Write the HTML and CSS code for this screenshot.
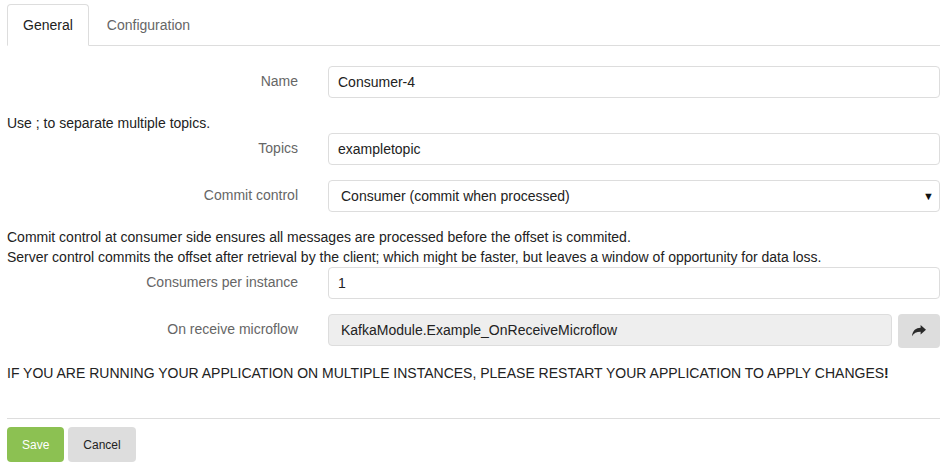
FILE: index.html
```html
<!DOCTYPE html>
<html>
<head>
<meta charset="utf-8">
<link rel="stylesheet" href="styles.css">
</head>
<body>
<div class="page">
  <ul class="tabs">
    <li class="tab active">General</li>
    <li class="tab">Configuration</li>
  </ul>
  <form class="form">
    <div class="row">
      <label class="label">Name</label>
      <div class="field"><div class="input">Consumer-4</div></div>
    </div>
    <p class="help">Use ; to separate multiple topics.</p>
    <div class="row">
      <label class="label">Topics</label>
      <div class="field"><div class="input">exampletopic</div></div>
    </div>
    <div class="row">
      <label class="label">Commit control</label>
      <div class="field"><div class="input select"><span class="sel-text">Consumer (commit when processed)</span><span class="caret">&#9660;</span></div></div>
    </div>
    <p class="help">Commit control at consumer side ensures all messages are processed before the offset is commited.<br>Server control commits the offset after retrieval by the client; which might be faster, but leaves a window of opportunity for data loss.</p>
    <div class="row">
      <label class="label">Consumers per instance</label>
      <div class="field"><div class="input">1</div></div>
    </div>
    <div class="row">
      <label class="label">On receive microflow</label>
      <div class="field group">
        <div class="input readonly">KafkaModule.Example_OnReceiveMicroflow</div>
        <button type="button" class="icon-btn">
          <svg width="14" height="12" viewBox="0 0 13 11"><path d="M13 4.3 L8 0 V2.4 C3.8 2.5 0.5 4.8 0 10.4 C1.6 7.6 4.2 6.4 8 6.3 V8.7 Z" fill="#2a2a2a"/></svg>
        </button>
      </div>
    </div>
    <p class="warning">IF YOU ARE RUNNING YOUR APPLICATION ON MULTIPLE INSTANCES, PLEASE RESTART YOUR APPLICATION TO APPLY CHANGES<b>!</b></p>
    <hr class="divider">
    <div class="actions">
      <button type="button" class="btn save">Save</button>
      <button type="button" class="btn cancel">Cancel</button>
    </div>
  </form>
</div>
</body>
</html>
```
FILE: styles.css
```css
* { box-sizing: border-box; }
html, body { margin: 0; padding: 0; background: #fff; }
body {
  font-family: "Liberation Sans", Arial, sans-serif;
  font-size: 14px;
  line-height: 20px;
  color: #222;
}
.page { padding: 4px 5px 0 7px; }
.tabs {
  list-style: none;
  margin: 0;
  padding: 0;
  display: flex;
  border-bottom: 1px solid #ddd;
}
.tab {
  padding: 10px 15px;
  margin-right: 2px;
  margin-bottom: -1px;
  border: 1px solid transparent;
  border-radius: 4px 4px 0 0;
  color: #666;
}
.tab.active {
  border-color: #ddd;
  border-bottom-color: #fff;
  background: #fff;
  color: #222;
}
.form { padding-top: 20px; }
.row {
  display: grid;
  grid-template-columns: 291px 1fr;
  column-gap: 30px;
  margin-bottom: 15px;
}
.label {
  text-align: right;
  color: #666;
  padding-top: 5px;
}
.field { min-width: 0; }
.input {
  height: 32px;
  border: 1px solid #ddd;
  border-radius: 4px;
  padding: 5px 9px;
  color: #222;
  background: #fff;
}
.select {
  display: flex;
  justify-content: space-between;
  align-items: center;
  padding: 5px 5px 5px 12px;
}
.caret { font-size: 11px; line-height: 10px; color: #111; }
.group { display: flex; gap: 6px; }
.readonly { flex: 1; background: #eee; padding-left: 12px; }
.icon-btn {
  width: 42px;
  height: 34px;
  border: none;
  border-radius: 4px;
  background: #ddd;
  display: flex;
  align-items: center;
  justify-content: center;
  padding: 0;
}
.help { margin: 0; }
.warning { margin: 14px 0 0 0; }
.divider {
  border: 0;
  border-top: 1px solid #ddd;
  margin: 35px 0 8px 0;
}
.actions { display: flex; gap: 4px; }
.btn {
  font-family: "Liberation Sans", Arial, sans-serif;
  font-size: 12px;
  height: 35px;
  padding: 0 15px;
  border: none;
  border-radius: 4px;
}
.save { background: #8cc152; color: #fff; }
.cancel { background: #ddd; color: #222; }
```
